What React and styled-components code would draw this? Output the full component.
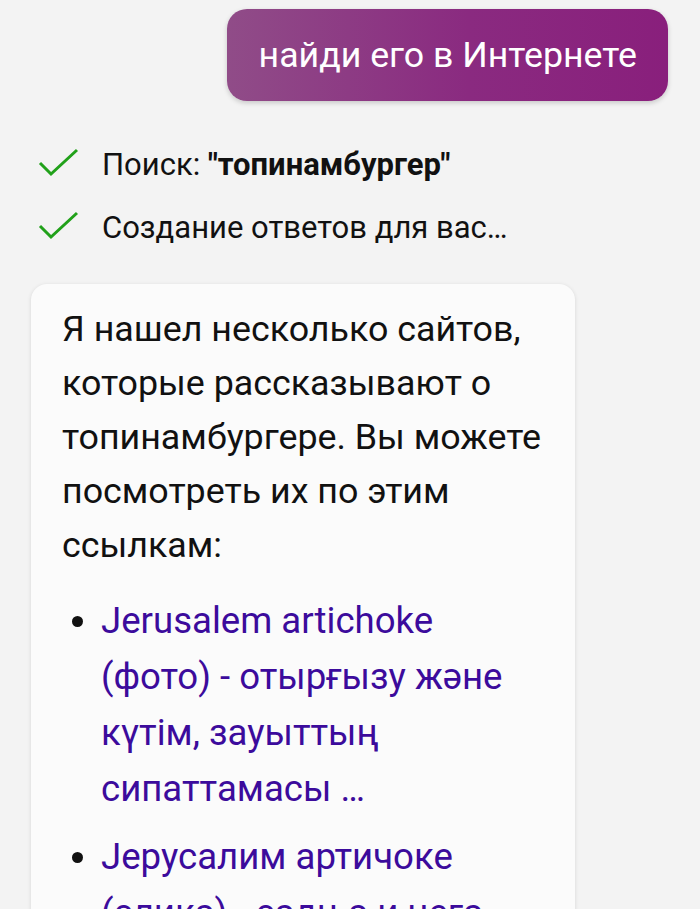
import React from 'react';
import styled, { createGlobalStyle } from 'styled-components';

const GlobalStyle = createGlobalStyle`
  html, body {
    margin: 0;
    padding: 0;
    background: #f3f3f3;
    font-family: Roboto, "Noto Sans", sans-serif;
  }
`;

const Page = styled.div`
  display: flex;
  flex-direction: column;
  padding: 9px 32px 0 31px;
  height: 909px;
  box-sizing: border-box;
  overflow: hidden;

  > * {
    flex-shrink: 0;
  }
`;

const UserBubble = styled.div`
  align-self: flex-end;
  height: 92px;
  padding: 0 31px 0 32px;
  display: flex;
  align-items: center;
  border-radius: 20px;
  background: linear-gradient(90deg, #904c88 0%, #8a2a80 55%, #891f7c 100%);
  box-shadow: 0 2px 5px rgba(0, 0, 0, 0.18);
  color: #fff;
  font-size: 35.7px;
`;

const Steps = styled.div`
  display: flex;
  flex-direction: column;
  gap: 21px;
  margin-top: 42px;
  padding-left: 7px;
`;

const Step = styled.div`
  display: flex;
  align-items: center;
  gap: 23px;
  font-size: 31px;
  color: #111;
  height: 42px;

  b {
    font-weight: 700;
  }
`;

const Check = () => (
  <svg width="41" height="32" viewBox="0 0 41 32">
    <path d="M2 15 L13 26 L39 2" fill="none" stroke="#21a11a" strokeWidth="3" />
  </svg>
);

const Card = styled.div`
  margin-top: 36px;
  width: 544px;
  box-sizing: border-box;
  background: #fbfbfb;
  border-radius: 16px;
  box-shadow: 0 1px 4px rgba(0, 0, 0, 0.12);
  padding: 18px 31px 0 31px;
  font-size: 35.8px;
  line-height: 54px;
  color: #111;
`;

const Text = styled.p`
  margin: 0;
`;

const Links = styled.ul`
  margin: 21px 0 0 0;
  padding-left: 39px;
  list-style: disc;
  line-height: 55px;

  li {
    margin-bottom: 12px;
  }
  li::marker {
    color: #111;
  }
`;

const Link = styled.a`
  color: #3c0b9c;
  font-size: 36.6px;
  text-decoration: none;
`;

export default function App() {
  return (
    <>
      <GlobalStyle />
      <Page>
        <UserBubble>найди его в Интернете</UserBubble>
        <Steps>
          <Step>
            <Check />
            <span>Поиск: <b>"топинамбургер"</b></span>
          </Step>
          <Step>
            <Check />
            <span>Создание ответов для вас…</span>
          </Step>
        </Steps>
        <Card>
          <Text>
            Я нашел несколько сайтов, которые рассказывают о топинамбургере. Вы можете посмотреть их по этим ссылкам:
          </Text>
          <Links>
            <li>
              <Link href="#">Jerusalem artichoke (фото) - отырғызу және күтім, зауыттың сипаттамасы …</Link>
            </li>
            <li>
              <Link href="#">Јерусалим артичоке (слика) - садња и нега, опис биљке …</Link>
            </li>
          </Links>
        </Card>
      </Page>
    </>
  );
}
